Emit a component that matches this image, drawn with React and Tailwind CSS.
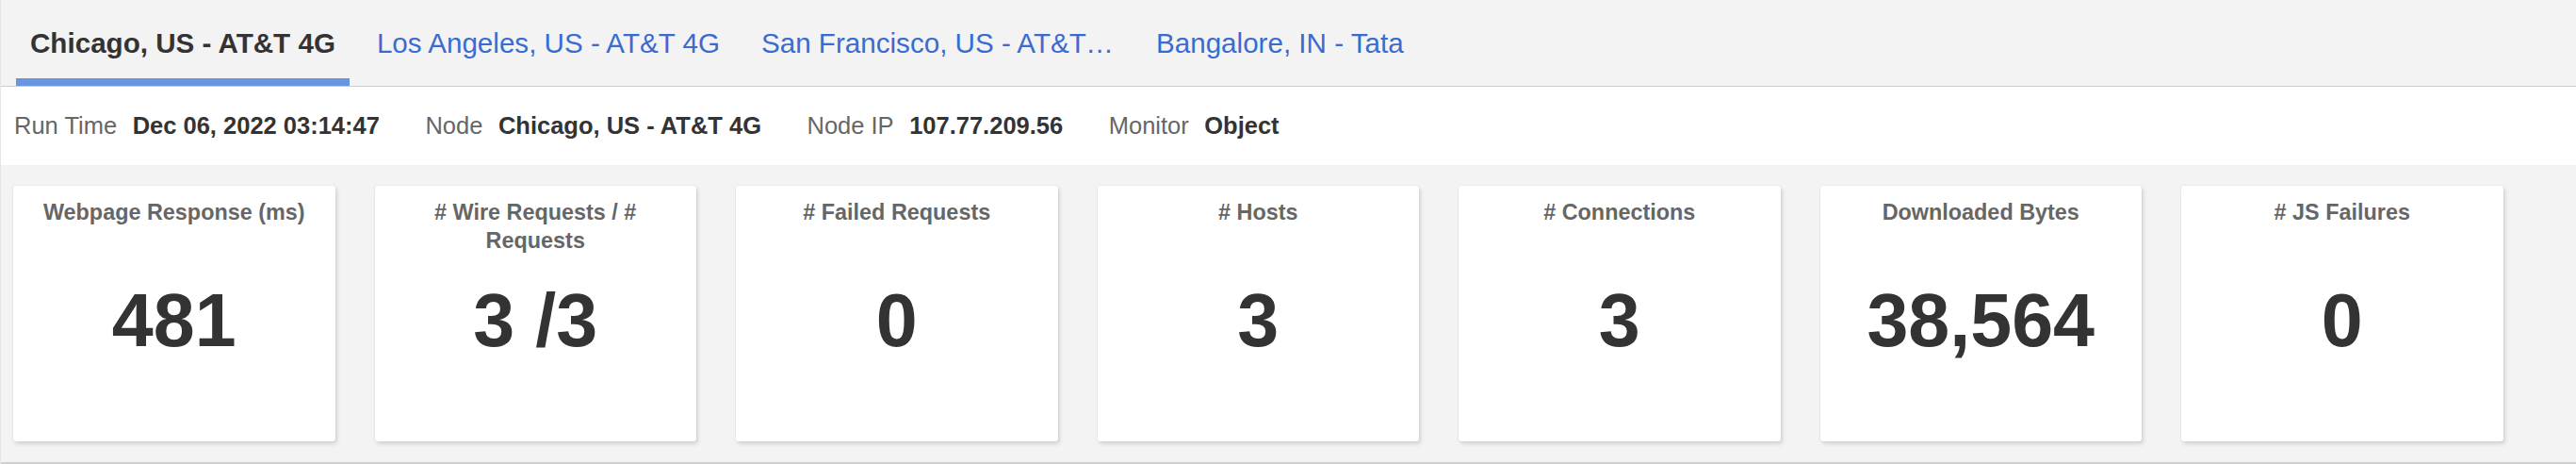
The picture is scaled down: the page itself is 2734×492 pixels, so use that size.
import React from "react";

const tabs = [
  { label: "Chicago, US - AT&T 4G", active: true },
  { label: "Los Angeles, US - AT&T 4G" },
  { label: "San Francisco, US - AT&T 4G", truncate: true },
  { label: "Bangalore, IN - Tata" },
];

const info = [
  { label: "Run Time", value: "Dec 06, 2022 03:14:47" },
  { label: "Node", value: "Chicago, US - AT&T 4G" },
  { label: "Node IP", value: "107.77.209.56" },
  { label: "Monitor", value: "Object" },
];

const metrics = [
  { title: "Webpage Response (ms)", value: "481" },
  { title: "# Wire Requests / # Requests", value: "3 /3" },
  { title: "# Failed Requests", value: "0" },
  { title: "# Hosts", value: "3" },
  { title: "# Connections", value: "3" },
  { title: "Downloaded Bytes", value: "38,564" },
  { title: "# JS Failures", value: "0" },
];

function Tab({ label, active, truncate }) {
  return (
    <div
      className={`px-[15px] pt-[29px] pb-[21px] border-b-[8px] ${
        active ? "border-[#6994e0]" : "border-transparent"
      } ${truncate ? "mr-[-4px]" : ""}`}
    >
      <div
        className={`text-[29.6px] leading-[33px] whitespace-nowrap ${
          active ? "font-bold text-[#333333]" : "text-[#3a6bd0]"
        } ${truncate ? "max-w-[379px] overflow-hidden text-ellipsis" : ""}`}
      >
        {label}
      </div>
    </div>
  );
}

function MetricCard({ title, value }) {
  return (
    <div className="w-[341.5px] h-[271px] shrink-0 bg-white rounded-[3px] shadow-[0_0_2px_rgba(0,0,0,0.12),2px_3px_4px_rgba(0,0,0,0.12)] px-[12px] pt-[12.6px] text-center">
      <div className="h-[89px] text-[23.4px] leading-[30.6px] font-bold text-[#666666]">
        {title}
      </div>
      <div className="text-[79px] leading-none font-bold text-[#333333] pt-[1px]">
        {value}
      </div>
    </div>
  );
}

export default function App() {
  return (
    <div
      className="w-full h-[492px] bg-[#f3f3f3] border-l border-[#e6e6e6] flex flex-col"
      style={{ fontFamily: '"Liberation Sans", Arial, sans-serif' }}
    >
      {/* Location tabs */}
      <div className="h-[92px] flex items-end gap-[14px] pl-[16px] border-b border-[#cccccc]">
        {tabs.map((t) => (
          <Tab key={t.label} {...t} />
        ))}
      </div>

      {/* Run info */}
      <div className="h-[83px] bg-white flex items-center gap-[48.5px] pl-[14px] text-[25.5px]">
        {info.map((i) => (
          <div key={i.label} className="flex items-center whitespace-nowrap">
            <span className="text-[#666666] mr-[16.5px]">{i.label}</span>
            <span className="font-bold text-[#333333]">{i.value}</span>
          </div>
        ))}
      </div>

      {/* Metric cards */}
      <div className="flex-1 flex gap-[42px] pl-[13px] pt-[22px] pb-[22px] border-b-2 border-[#cfcfcf]">
        {metrics.map((m) => (
          <MetricCard key={m.title} {...m} />
        ))}
      </div>
    </div>
  );
}
